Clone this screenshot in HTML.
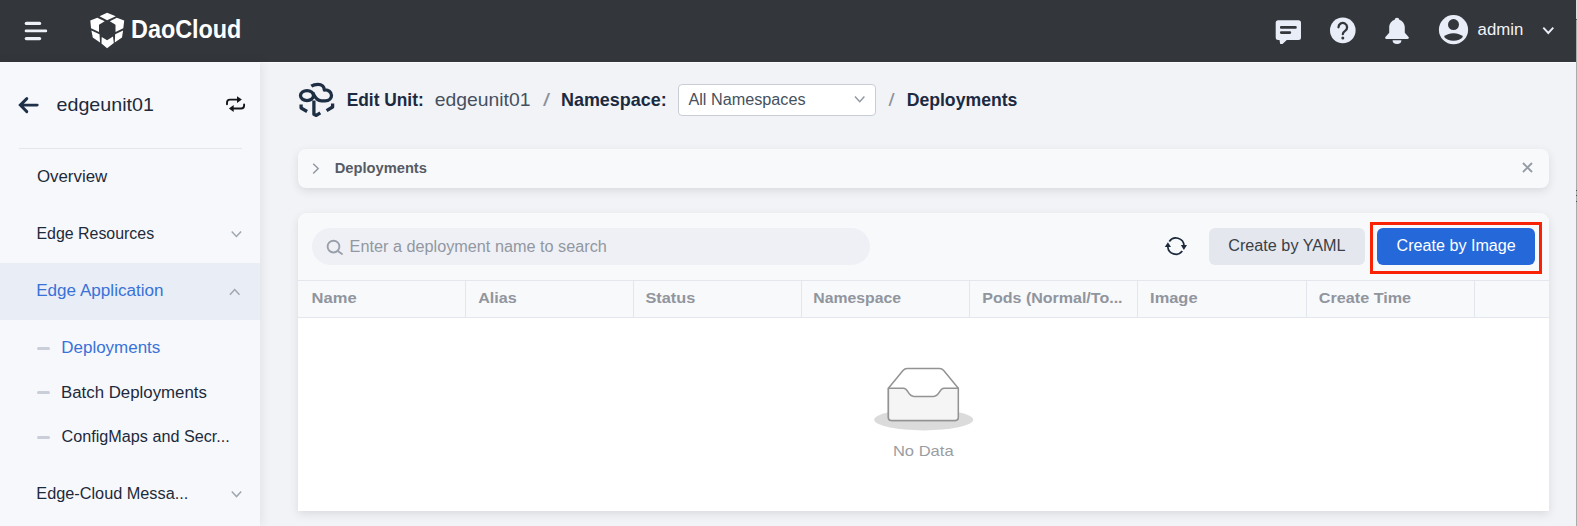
<!DOCTYPE html>
<html lang="en">
<head>
<meta charset="utf-8">
<title>Deployments</title>
<style>
*{box-sizing:border-box;margin:0;padding:0}
html,body{width:1577px;height:526px;overflow:hidden}
body{position:relative;background:#f2f3f7;font-family:"Liberation Sans",sans-serif;color:#1f2329}
.abs{position:absolute}
.t{position:absolute;white-space:nowrap;line-height:20px;transform-origin:0 50%}
.b{font-weight:bold}
#header{left:0;top:0;width:1576px;height:62px;background:#33363b}
#hline{left:0;top:62px;width:1576px;height:1px;background:#fbfbfd}
#edge{left:1576px;top:0;width:1px;height:526px;background:#ababab}
#edge i{position:absolute;left:0;top:0;width:1px;height:20px;background:#dcdcdc;border-bottom:1px solid #555}
#edge b{position:absolute;left:0;width:1px;height:1px;background:#4a4a4a}
#sidebar{left:0;top:62px;width:260px;height:464px;background:#f7f8fb;box-shadow:2px 0 10px rgba(0,0,0,.07)}
#active{left:0;top:201px;width:260px;height:57px;background:#e9edf5}
.dash{position:absolute;left:37px;width:13px;height:3px;background:#c9ced8;border-radius:1.5px}
#sel{left:678px;top:84px;width:198px;height:32px;background:#fff;border:1px solid #c9cdd8;border-radius:4px}
#card1{left:298px;top:149px;width:1251px;height:39px;background:#f8f9fb;border-radius:8px;box-shadow:0 3px 10px rgba(0,0,0,.1)}
#card2{left:298px;top:213px;width:1251px;height:297.5px;background:#fff;border-radius:9px 9px 0 0;box-shadow:0 3px 10px rgba(0,0,0,.1);overflow:hidden}
#toolbar{left:0;top:0;width:1251px;height:68px;background:#f8f9fb}
#search{left:14px;top:15px;width:558px;height:37px;border-radius:19px;background:#eef0f5}
#thead{left:0;top:67px;width:1251px;height:38px;background:#f8f9fb;border-top:1px solid #e3e6ec;border-bottom:1px solid #e3e6ec}
.vl{position:absolute;top:0;width:1px;height:36px;background:#e3e6ec}
.btn{position:absolute;top:15px;height:37px;border-radius:6px}
#yaml{left:911px;width:156px;background:#e4e7ee}
#img{left:1079px;width:158px;background:#2468da}
#red{left:1072px;top:9px;width:172px;height:52px;border:3px solid #fa2205}
</style>
</head>
<body>
<div id="header" class="abs">
  <svg class="abs" style="left:20px;top:18px" width="32" height="26" viewBox="20 18 32 26"><g fill="#eef1f8"><rect x="24.7" y="21.8" width="16.5" height="3.2" rx="1.6"/><rect x="24.7" y="29.6" width="22.5" height="2.6" rx="1.3"/><rect x="24.7" y="37" width="16.5" height="3.2" rx="1.6"/></g></svg>
  <svg class="abs" style="left:90px;top:12px" width="35" height="37" viewBox="0 0 35 37"><g fill="#fff"><path d="M17.1 .8 L25.8 4.2 L17.1 8.2 L9.5 4.2Z"/><path d="M.3 8.5 L7.3 5.8 L14.7 9.3 L9 12.7 L9 20.1 L1.05 16.3Z"/><path d="M1.4 18.5 L9.5 22.3 L10 30.4 L2.8 25.5Z"/><path d="M11.7 25 L17.1 28.2 L23 24.6 L23.8 30.9 L17.1 36.3 L11.5 31.5Z"/><path d="M34.2 8.5 L26.8 5.8 L19.8 9.3 L25.5 12.7 L25.5 20.1 L33.3 16.3Z"/><path d="M33.1 18.5 L25.2 22.3 L24.7 30.4 L32 25.5Z"/></g></svg>
  <!-- right icons -->
  <svg class="abs" style="left:1274px;top:18px" width="30" height="28" viewBox="0 0 30 28"><path d="M4.2 2.2h20.3a2.5 2.5 0 0 1 2.5 2.5v14.8a2.5 2.5 0 0 1-2.5 2.5H12.8l-4.3 4h-2.3l-.7-4H4.2a2.5 2.5 0 0 1-2.5-2.5V4.7a2.5 2.5 0 0 1 2.5-2.5z" fill="#e9edf7"/><path d="M7.2 9.4h14.3M7.2 14.6h8.7" stroke="#33363b" stroke-width="2.6" stroke-linecap="round"/></svg>
  <svg class="abs" style="left:1329px;top:17px" width="28" height="28" viewBox="0 0 28 28"><circle cx="13.8" cy="13.4" r="12.8" fill="#e9edf7"/><path d="M9.5 10.3a4.3 4.3 0 1 1 6.6 3.6c-1.5 1-2.3 1.7-2.3 3.3" fill="none" stroke="#33363b" stroke-width="2.3" stroke-linecap="round"/><circle cx="13.8" cy="21" r="1.5" fill="#33363b"/></svg>
  <svg class="abs" style="left:1384px;top:16px" width="27" height="30" viewBox="0 0 27 30"><path d="M13 1.7c1.3 0 2.2 .9 2.3 2.1c3.2 1 5.5 4 5.5 7.7v5.2l3.8 4.3c.6 .7 .1 2-1 2H2.4c-1.1 0-1.6-1.3-1-2l3.8-4.3v-5.2c0-3.7 2.3-6.7 5.5-7.7c.1-1.2 1-2.1 2.3-2.1z" fill="#e9edf7"/><path d="M8.6 24.2h8.8a4.4 3.8 0 0 1-8.8 0z" fill="#e9edf7"/></svg>
  <svg class="abs" style="left:1438px;top:14px" width="32" height="32" viewBox="0 0 32 32"><circle cx="15.5" cy="15.7" r="14.6" fill="#e9edf7"/><circle cx="15.5" cy="10.6" r="5.5" fill="#33363b"/><path d="M6 22.8c2-2.4 5.5-3.6 9.5-3.6s7.5 1.2 9.5 3.6c-2 2.6-5.5 3.9-9.5 3.9s-7.5-1.3-9.5-3.9z" fill="#33363b"/></svg>
  <svg class="abs" style="left:1541px;top:25px" width="15" height="11" viewBox="0 0 15 11"><path d="M2.3 2.7l5 5.3 5-5.3" fill="none" stroke="#e9edf7" stroke-width="1.9"/></svg>
</div>
<div id="hline" class="abs"></div>
<div id="edge" class="abs"><i></i><b style="top:190px"></b><b style="top:195px"></b><b style="top:201px"></b></div>

<div id="sidebar" class="abs">
  <div class="abs" style="left:19px;top:86px;width:223px;height:1px;background:#e4e6ec"></div>
  <div id="active" class="abs"></div>
  <div class="dash" style="top:284.5px"></div>
  <div class="dash" style="top:329px"></div>
  <div class="dash" style="top:374px"></div>
</div>
<!-- sidebar icons (page coords) -->
<svg class="abs" style="left:0;top:62px" width="260" height="464" viewBox="0 62 260 464">
  <path d="M26.8 98.6L20.3 105.1L26.8 111.6M20.8 105.1H37.2" fill="none" stroke="#1e3148" stroke-width="2.9" stroke-linecap="round" stroke-linejoin="miter"/>
  <g fill="none" stroke="#14161a" stroke-width="1.9" stroke-linecap="round"><path d="M227 104.3V102.6a3 3 0 0 1 3-3H237.5"/><path d="M244.1 104.4V105.5a3 3 0 0 1-3 3H233.2"/></g>
  <path d="M237 96.2L241.9 99.6L237 103z" fill="#14161a"/><path d="M233.7 105.1L228.9 108.5L233.7 111.9z" fill="#14161a"/>
  <path d="M231.7 231.4l4.7 5 4.7-5" fill="none" stroke="#a0a6b0" stroke-width="1.5"/>
  <path d="M229.9 294.8l4.8-5.2 4.8 5.2" fill="none" stroke="#a0a6b0" stroke-width="1.5"/>
  <path d="M231.8 491.6l4.7 5 4.7-5" fill="none" stroke="#a0a6b0" stroke-width="1.5"/>
</svg>

<svg class="abs" style="left:292px;top:76px" width="50" height="48" viewBox="0 0 50 48"><g fill="none" stroke="#1e2f44" stroke-width="3.3" stroke-linecap="butt" stroke-linejoin="round"><ellipse cx="15" cy="19.6" rx="6.5" ry="5"/><path d="M20.8 16.9C22.5 20 24 24.8 29.5 24.8L33 24.8C37.5 24.8 39.5 21.8 39.5 19.5C39.5 16 36.5 13.7 32.3 14C32.3 11 30 8.3 26 8.3C23 8.3 21 9 19.3 10.2"/><path d="M21.9 24.4V38.2L24.3 39.4L28.3 36.9"/><path d="M9.1 28.5V32L15.1 35.5"/><path d="M40.6 27.6V31L34.6 34.7"/></g></svg>
<div id="sel" class="abs"></div>
<svg class="abs" style="left:852px;top:93px" width="16" height="12" viewBox="0 0 16 12"><path d="M3 3.5l4.7 5.2 4.7-5.2" fill="none" stroke="#9096a1" stroke-width="1.4"/></svg>

<div id="card1" class="abs">
  <svg class="abs" style="left:12px;top:12px" width="12" height="15" viewBox="0 0 12 15"><path d="M3.2 2.7l5 4.9-5 4.9" fill="none" stroke="#9096a1" stroke-width="1.4"/></svg>
  <svg class="abs" style="left:1222.5px;top:11.5px" width="13" height="13" viewBox="0 0 13 13"><path d="M2 2l9 9M11 2l-9 9" fill="none" stroke="#959aa4" stroke-width="1.9"/></svg>
</div>

<div id="card2" class="abs">
  <div id="toolbar" class="abs">
    <div id="search" class="abs"></div>
    <svg class="abs" style="left:28px;top:26px" width="19" height="17" viewBox="0 0 19 17"><circle cx="7.5" cy="7.6" r="5.9" fill="none" stroke="#9aa0aa" stroke-width="1.9"/><path d="M11.8 12l4.2 3" stroke="#9aa0aa" stroke-width="1.9" stroke-linecap="round"/></svg>
    <svg class="abs" style="left:864px;top:21px" width="28" height="24" viewBox="1162 234 28 24"><g fill="none" stroke="#1c2a3c" stroke-width="1.7"><path d="M1169.3 241.4A8.1 8.1 0 0 1 1184 245.5"/><path d="M1182.3 251.1A8.1 8.1 0 0 1 1167.8 246.7"/></g><path d="M1180.8 245.1h6.2l-3.1 4.9z" fill="#1c2a3c"/><path d="M1164.8 246.9h6.2l-3.1-4.6z" fill="#1c2a3c"/></svg>
    <div id="yaml" class="btn"></div>
    <div id="img" class="btn"></div>
    <div id="red" class="abs"></div>
  </div>
  <div id="thead" class="abs">
    <div class="vl" style="left:167px"></div>
    <div class="vl" style="left:335px"></div>
    <div class="vl" style="left:503px"></div>
    <div class="vl" style="left:671px"></div>
    <div class="vl" style="left:839px"></div>
    <div class="vl" style="left:1008px"></div>
    <div class="vl" style="left:1176px"></div>
  </div>
  <svg class="abs" style="left:574px;top:152px" width="104" height="70" viewBox="872 365 104 70"><ellipse cx="923.7" cy="419.8" rx="49.5" ry="10.6" fill="#dbdbdb"/><path d="M888.4 388.3L903 370.6Q904.8 368.6 907 368.6H939.7Q941.9 368.6 943.7 370.6L958.3 388.3V417.5a3 3 0 0 1-3 3H891.4a3 3 0 0 1-3-3Z" fill="#fff" stroke="#939393" stroke-width="1.5" stroke-linejoin="round"/><path d="M888.4 388.3H903.5C908.5 388.3 907.5 396.5 914 396.5H933.5C940 396.5 939 388.3 944 388.3H958.3V417.5a3 3 0 0 1-3 3H891.4a3 3 0 0 1-3-3Z" fill="#f5f5f5" stroke="#939393" stroke-width="1.5" stroke-linejoin="round"/></svg>
</div>
<div id="labels">
<span id="logo" class="t b" style="left:131px;top:19px;font-size:25.5px;color:#ffffff;transform:translateX(0.04px) scaleX(0.9166)">DaoCloud</span>
<span id="admin" class="t" style="left:1477px;top:20px;font-size:16px;color:#f1f3f8;transform:translateX(0.57px) scaleX(1.0487)">admin</span>
<span id="unit" class="t" style="left:56px;top:95px;font-size:19px;color:#1d2a3b;transform:translateX(0.5px) scaleX(1.0351)">edgeunit01</span>
<span id="m1" class="t" style="left:36px;top:167px;font-size:16px;color:#1d2a3b;transform:translateX(0.92px) scaleX(1.054)">Overview</span>
<span id="m2" class="t" style="left:36px;top:224px;font-size:16px;color:#1d2a3b;transform:translateX(0.46px) scaleX(0.9944)">Edge Resources</span>
<span id="m3" class="t" style="left:36px;top:281px;font-size:16px;color:#3872d8;transform:translateX(0.18px) scaleX(1.0687)">Edge Application</span>
<span id="s1" class="t" style="left:61px;top:338px;font-size:16px;color:#3872d8;transform:translateX(0.3px) scaleX(1.0601)">Deployments</span>
<span id="s2" class="t" style="left:61px;top:383px;font-size:16px;color:#1d2a3b;transform:translateX(0.04px) scaleX(1.051)">Batch Deployments</span>
<span id="s3" class="t" style="left:61px;top:427px;font-size:16px;color:#1d2a3b;transform:translateX(0.54px) scaleX(1.0116)">ConfigMaps and Secr...</span>
<span id="m4" class="t" style="left:36px;top:484px;font-size:16px;color:#1d2a3b;transform:translateX(0.31px) scaleX(1.017)">Edge-Cloud Messa...</span>
<span id="c1" class="t b" style="left:346px;top:90px;font-size:19px;color:#1b2a3f;transform:translateX(0.68px) scaleX(0.9122)">Edit Unit:</span>
<span id="c2" class="t" style="left:434px;top:90px;font-size:19px;color:#44505f;transform:translateX(0.74px) scaleX(1.0186)">edgeunit01</span>
<span id="c3" class="t" style="left:543px;top:90px;font-size:18px;color:#8a8f99;transform:translateX(0.05px) scaleX(1.4067)">/</span>
<span id="c4" class="t b" style="left:560px;top:90px;font-size:19px;color:#1b2a3f;transform:translateX(0.99px) scaleX(0.9439)">Namespace:</span>
<span id="c5" class="t" style="left:688px;top:90px;font-size:16px;color:#465160;transform:translateX(0.43px) scaleX(1.0135)">All Namespaces</span>
<span id="c6" class="t" style="left:888px;top:90px;font-size:18px;color:#8a8f99;transform:translateX(0.5px) scaleX(1.214)">/</span>
<span id="c7" class="t b" style="left:906px;top:90px;font-size:19px;color:#1b2a3f;transform:translateX(0.65px) scaleX(0.9283)">Deployments</span>
<span id="k1" class="t b" style="left:334px;top:158px;font-size:14.3px;color:#565b64;transform:translateX(0.68px) scaleX(1.0274)">Deployments</span>
<span id="ph" class="t" style="left:349px;top:237px;font-size:16px;color:#9297a1;transform:translateX(0.56px) scaleX(1.0149)">Enter a deployment name to search</span>
<span id="by" class="t" style="left:1228px;top:236px;font-size:16px;color:#3a3f47;transform:translateX(0.28px) scaleX(1.0119)">Create by YAML</span>
<span id="bi" class="t" style="left:1396px;top:236px;font-size:16px;color:#ffffff;transform:translateX(0.62px) scaleX(1.007)">Create by Image</span>
<span id="h1" class="t b" style="left:311px;top:288px;font-size:15.5px;color:#90959e;transform:translateX(0.53px) scaleX(1.0675)">Name</span>
<span id="h2" class="t b" style="left:478px;top:288px;font-size:15.5px;color:#90959e;transform:translateX(0.13px) scaleX(1.0432)">Alias</span>
<span id="h3" class="t b" style="left:645px;top:288px;font-size:15.5px;color:#90959e;transform:translateX(0.43px) scaleX(1.0515)">Status</span>
<span id="h4" class="t b" style="left:813px;top:288px;font-size:15.5px;color:#90959e;transform:translateX(0.37px) scaleX(1.0169)">Namespace</span>
<span id="h5" class="t b" style="left:982px;top:288px;font-size:15.5px;color:#90959e;transform:translateX(0.3px) scaleX(1.0328)">Pods (Normal/To...</span>
<span id="h6" class="t b" style="left:1150px;top:288px;font-size:15.5px;color:#90959e;transform:translateX(0.11px) scaleX(1.058)">Image</span>
<span id="h7" class="t b" style="left:1318px;top:288px;font-size:15.5px;color:#90959e;transform:translateX(0.8px) scaleX(1.0433)">Create Time</span>
<span id="nd" class="t" style="left:892px;top:441px;font-size:15px;color:#9a9da2;transform:translateX(0.93px) scaleX(1.1026)">No Data</span>
</div>
</body>
</html>
